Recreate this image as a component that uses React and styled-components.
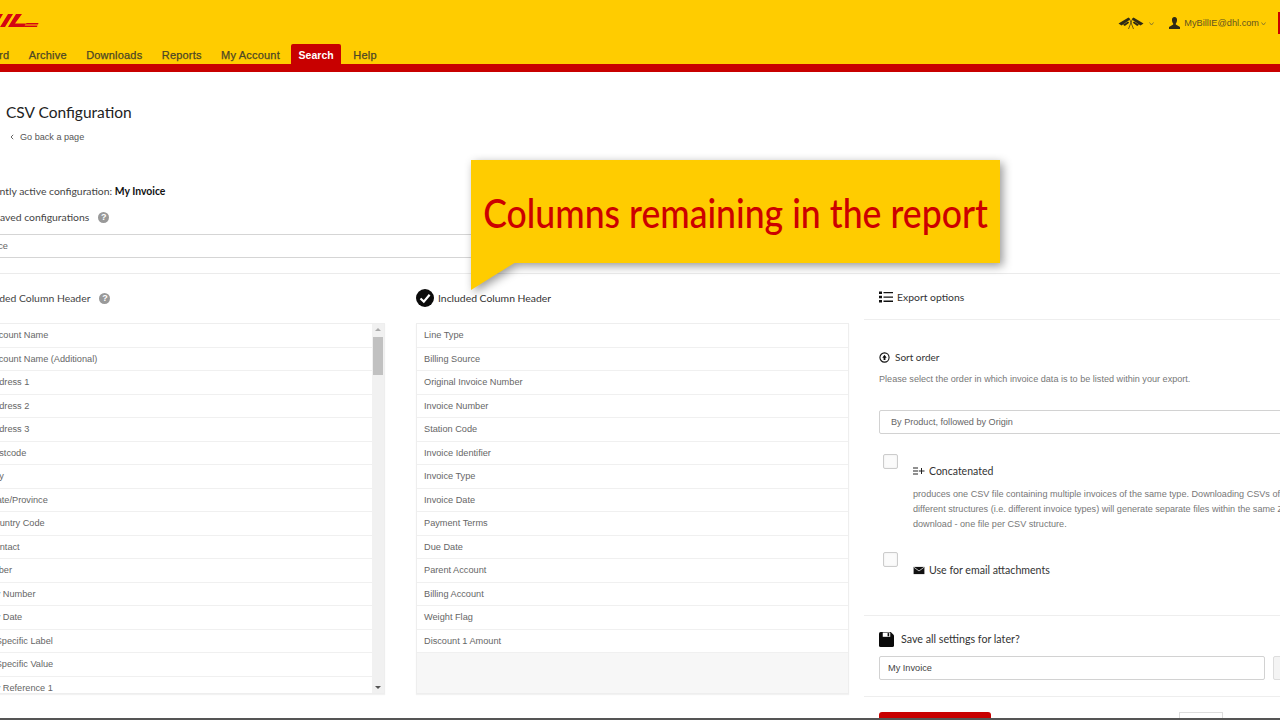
import React from "react";
import styled, { createGlobalStyle } from "styled-components";

const Global = createGlobalStyle`
  html, body { margin: 0; padding: 0; background: #fff; }
  body { font-family: "Liberation Sans", Arial, sans-serif; }
  * { box-sizing: border-box; }
`;

const Viewport = styled.div`
  position: relative;
  width: 1280px;
  height: 720px;
  overflow: hidden;
  background: #fff;
  filter: blur(0.4px);
`;

const Header = styled.header`
  height: 72px;
  background: #ffcc00;
  border-bottom: 8px solid #c80000;
  display: flex;
  flex-direction: column;
`;

const TopRow = styled.div`
  height: 44px;
  flex: none;
  display: flex;
  align-items: flex-start;
  justify-content: space-between;
`;

const Logo = styled.svg`
  width: 40px;
  height: 14px;
  margin-top: 14px;
  color: #d40511;
`;

const UserArea = styled.div`
  display: flex;
  align-items: center;
  height: 22px;
  margin-top: 12px;
  color: #5f5320;
  font-size: 9.2px;
`;

const Lang = styled.svg`
  width: 26px;
  height: 14px;
  color: #2f2a15;
`;

const Caret = styled.svg`
  width: 5px;
  height: 4px;
  margin: 1px 0 0 ${(p) => p.$left}px;
  color: #7f7130;
`;

const Person = styled.svg`
  width: 11px;
  height: 12px;
  margin: 0 4px 0 15px;
  color: #2f2a15;
`;

const Flag = styled.span`
  width: 2px;
  height: 22px;
  margin-left: 12px;
  background: #c80000;
`;

const Nav = styled.nav`
  height: 20px;
  display: flex;
  margin-left: -56px;
`;

const Tab = styled.a`
  height: 20px;
  padding: ${(p) => (p.$active ? "1px 7.5px 0" : "1px 9.7px 0")};
  margin: ${(p) => (p.$active ? "0 2.5px 0 1.5px" : "0")};
  display: flex;
  align-items: center;
  font-size: ${(p) => (p.$active ? "10.5px" : "11px")};
  font-weight: ${(p) => (p.$active ? 700 : 400)};
  letter-spacing: ${(p) => (p.$active ? "0" : "0.2px")};
  -webkit-text-stroke: ${(p) => (p.$active ? "0" : "0.25px")};
  color: ${(p) => (p.$active ? "#fff" : "#4d4726")};
  background: ${(p) => (p.$active ? "#c80000" : "transparent")};
  border-radius: 2px 2px 0 0;
`;

const Body = styled.main`
  width: 1380px;
  margin-left: -40px;
`;

const TitleBlock = styled.div`
  padding: 30px 0 0 46px;
  height: 108px;
`;

const Title = styled.h1`
  margin: 0;
  font: 400 15.5px/20px Lato, sans-serif;
  color: #222;
`;

const Back = styled.div`
  margin: 8px 0 0 4px;
  display: flex;
  align-items: center;
  gap: 6px;
  font-size: 9.1px;
  line-height: 14px;
  color: #555;
`;

const ConfigBlock = styled.section`
  height: 94px;
  padding: 3px 0 0 14px;
  border-bottom: 1px solid #ebebeb;
`;

const ActiveLine = styled.div`
  font: 400 10.4px/16px Lato, sans-serif;
  color: #444;
  white-space: nowrap;
  b { color: #111; font-weight: 700; }
`;

const Label = styled.div`
  display: flex;
  align-items: center;
  font: 400 ${(p) => p.$size || 10.4}px/16px Lato, sans-serif;
  color: ${(p) => p.$color || "#444"};
  white-space: nowrap;
`;

const SavedLabel = styled(Label)`
  margin: 10px 0 0 -3px;
`;

const Help = styled.span`
  width: 11px;
  height: 11px;
  margin-left: 9px;
  border-radius: 50%;
  background: #999;
  color: #fff;
  font: 700 9px/11px "Liberation Sans", sans-serif;
  text-align: center;
`;

const ConfigSelect = styled.div`
  width: 1020px;
  height: 24px;
  margin: 9px 0 0 -14px;
  padding-left: 4px;
  border-top: 1px solid #d5d5d5;
  border-bottom: 1px solid #d5d5d5;
  font-size: 9.2px;
  line-height: 22px;
  color: #666;
`;

const Columns = styled.div`
  display: grid;
  grid-template-columns: 405px 433px 1fr;
  column-gap: 31px;
  padding-left: 20px;
`;

const ListColumn = styled.section`
  padding-top: 14px;
`;

const ListTitle = styled(Label)`
  height: 20px;
  margin-bottom: 15px;
  margin-left: ${(p) => p.$left || 0}px;
`;

const CheckIcon = styled.svg`
  width: 18px;
  height: 18px;
  margin-right: 4px;
`;

const ListBox = styled.div`
  position: relative;
  height: 371px;
  overflow: hidden;
  border: 1px solid #eee;
  background: ${(p) => p.$bg || "#fff"};
  padding-right: ${(p) => (p.$scroll ? "12px" : "0")};
  box-shadow: 0 1px 1px rgba(0, 0, 0, 0.05);
`;

const Row = styled.div`
  height: 23.5px;
  padding-left: 7px;
  border-bottom: 1px solid #f0f0f0;
  background: #fff;
  font-size: 9.2px;
  line-height: 22.5px;
  color: #666;
  white-space: nowrap;
`;

const ScrollBar = styled.div`
  position: absolute;
  top: 0;
  right: 0;
  bottom: 0;
  width: 12px;
  background: #f1f1f1;
`;

const ScrollThumb = styled.div`
  position: absolute;
  top: 13px;
  left: 1px;
  width: 10px;
  height: 38px;
  background: #c1c1c1;
`;

const Arrow = styled.span`
  position: absolute;
  left: 3px;
  ${(p) => (p.$up ? "top: 4px;" : "bottom: 4px;")}
  width: 0;
  height: 0;
  border-left: 3px solid transparent;
  border-right: 3px solid transparent;
  ${(p) => (p.$up ? "border-bottom: 3px solid #aaa;" : "border-top: 3px solid #555;")}
`;

const Options = styled.aside`
  margin-left: -16px;
`;

const OptionsHead = styled(Label)`
  height: 46px;
  padding-left: 15px;
  border-bottom: 1px solid #eee;
  margin-bottom: 29px;
`;

const HeadIcon = styled.svg`
  width: ${(p) => p.$w || 14}px;
  height: ${(p) => p.$h || 14}px;
  margin-right: ${(p) => p.$gap || 4}px;
  flex: none;
`;

const Pad = styled.div`
  padding-left: 15px;
`;

const Help2 = styled.p`
  margin: 7px 0 0;
  font-size: 9.1px;
  line-height: 14px;
  color: #777;
  white-space: nowrap;
`;

const OptSelect = styled.div`
  height: 24px;
  margin-top: 24px;
  padding-left: 11px;
  border: 1px solid #d2d2d2;
  border-radius: 2px;
  font-size: 9.1px;
  line-height: 22px;
  color: #666;
`;

const CheckRow = styled.div`
  display: grid;
  grid-template-columns: 30px 1fr;
  padding-left: 4px;
  margin-top: ${(p) => p.$top}px;
`;

const Check = styled.span`
  width: 15px;
  height: 15px;
  border: 1px solid #ccc;
  border-radius: 2px;
  background: #fbfbfb;
  box-shadow: inset 0 0 2px rgba(0, 0, 0, 0.08);
`;

const CheckBody = styled.div`
  padding-top: ${(p) => p.$top || 9}px;
`;

const Para = styled.p`
  margin: 8px 0 0;
  font-size: 9.1px;
  line-height: 15px;
  color: #777;
  white-space: nowrap;
`;

const Separator = styled.div`
  height: 1px;
  margin-top: ${(p) => p.$top}px;
  background: #eee;
`;

const SaveLabel = styled(Label)`
  margin-top: 15px;
`;

const SaveRow = styled.div`
  display: flex;
  gap: 8px;
  margin-top: 9px;
`;

const SaveInput = styled.div`
  width: 386px;
  height: 24px;
  padding-left: 8px;
  border: 1px solid #d2d2d2;
  border-radius: 2px;
  font-size: 9.2px;
  line-height: 22px;
  color: #444;
`;

const SaveButton = styled.div`
  width: 60px;
  height: 24px;
  border: 1px solid #ddd;
  border-radius: 2px;
  background: #f4f4f4;
`;

const Actions = styled.div`
  display: flex;
  margin-top: 15px;
`;

const RedButton = styled.div`
  width: 112px;
  height: 24px;
  border-radius: 3px 3px 0 0;
  background: #c80000;
`;

const GhostButton = styled.div`
  width: 44px;
  height: 24px;
  margin-left: 188px;
  border: 1px solid #ddd;
  background: #fff;
`;

const BottomEdge = styled.div`
  position: absolute;
  left: 0;
  right: 0;
  bottom: 0;
  height: 2px;
  background: #555;
`;

const Callout = styled.div`
  position: absolute;
  left: 471px;
  top: 160px;
  width: 529px;
  height: 103px;
  display: flex;
  align-items: center;
  justify-content: center;
  background: #ffcc00;
  filter: drop-shadow(3px 3px 5px rgba(0, 0, 0, 0.4));
  &::after {
    content: "";
    position: absolute;
    left: 0;
    top: 102px;
    width: 45px;
    height: 28px;
    background: #ffcc00;
    clip-path: polygon(0 0, 100% 0, 0 100%);
  }
`;

const CalloutText = styled.span`
  font: 500 40px/1 Lato, sans-serif;
  color: #cc0000;
  white-space: nowrap;
  transform: scaleX(0.89);
  margin-top: 2px;
`;

const left = ["Account Name","Account Name (Additional)","Address 1","Address 2","Address 3","Postcode","City","State/Province","Country Code","Contact","Faber","Inv Number","Inv Date","– Specific Label","– Specific Value","Inv Reference 1"];
const mid = ["Line Type","Billing Source","Original Invoice Number","Invoice Number","Station Code","Invoice Identifier","Invoice Type","Invoice Date","Payment Terms","Due Date","Parent Account","Billing Account","Weight Flag","Discount 1 Amount"];

const chevronCaret = <path d="M0.5 0.5 L2.5 3 L4.5 0.5" fill="none" stroke="currentColor" strokeWidth="0.9" />;

export default function App() {
  return (
    <Viewport>
      <Global />
      <Header>
        <TopRow>
          <Logo viewBox="0 0 40 14" aria-label="DHL">
            <path fill="currentColor" d="M-1 0 H3 L0 5 H-1 Z M0 13 L8 0 H13 L5 13 Z M8 13 L16 0 H22 L15 9.5 H26 L24 13 Z M26.5 9 H38.5 L38 10.5 H25.5 Z M25 11.5 H37.5 L37 13 H24 Z" />
          </Logo>
          <UserArea>
            <Lang viewBox="0 0 26 14">
              <path fill="currentColor" d="M0.5 7.5 L10.5 1.5 L12.5 3.2 L3.5 9.5 Z M25.5 7.5 L15.5 1.5 L13.5 3.2 L22.5 9.5 Z M5 8.8 L10 5.5 L11.2 6.8 L6.8 10 Z M21 8.8 L16 5.5 L14.8 6.8 L19.2 10 Z" />
              <path stroke="currentColor" strokeWidth="0.7" fill="none" d="M14 4 L10.5 13 M12 4 L15.5 13" />
            </Lang>
            <Caret $left={5} viewBox="0 0 5 4">{chevronCaret}</Caret>
            <Person viewBox="0 0 11 12">
              <path fill="currentColor" d="M5.5 0 C7.4 0 8.2 1.5 8 3.5 C7.9 5 7.2 6 6.8 6.6 L6.8 7.6 L11 10 L11 12 L0 12 L0 10 L4.2 7.6 L4.2 6.6 C3.8 6 3.1 5 3 3.5 C2.8 1.5 3.6 0 5.5 0 Z" />
            </Person>
            <span>MyBillIE@dhl.com</span>
            <Caret $left={2} viewBox="0 0 5 4">{chevronCaret}</Caret>
            <Flag />
          </UserArea>
        </TopRow>
        <Nav>
          <Tab>Dashboard</Tab>
          <Tab>Archive</Tab>
          <Tab>Downloads</Tab>
          <Tab>Reports</Tab>
          <Tab>My Account</Tab>
          <Tab $active>Search</Tab>
          <Tab>Help</Tab>
        </Nav>
      </Header>
      <Body>
        <TitleBlock>
          <Title>CSV Configuration</Title>
          <Back>
            <svg width="4" height="6" viewBox="0 0 4 6"><path d="M3.2 0.8 L1 3 L3.2 5.2" fill="none" stroke="#555" strokeWidth="0.9" /></svg>
            Go back a page
          </Back>
        </TitleBlock>
        <ConfigBlock>
          <ActiveLine>Currently active configuration: <b>My Invoice</b></ActiveLine>
          <SavedLabel>Load saved configurations<Help>?</Help></SavedLabel>
          <ConfigSelect>My Invoice</ConfigSelect>
        </ConfigBlock>
        <Columns>
          <ListColumn>
            <ListTitle $left={-5}>Excluded Column Header<Help>?</Help></ListTitle>
            <ListBox $scroll>
              {left.map((t) => <Row key={t}>{t}</Row>)}
              <ScrollBar>
                <Arrow $up />
                <ScrollThumb />
                <Arrow />
              </ScrollBar>
            </ListBox>
          </ListColumn>
          <ListColumn>
            <ListTitle $color="#333">
              <CheckIcon viewBox="0 0 18 18">
                <circle cx="9" cy="9" r="9" fill="#0b0b0b" />
                <path d="M4.5 9.5 L7.8 12.6 L13.6 5.8" fill="none" stroke="#fff" strokeWidth="2.2" />
              </CheckIcon>
              Included Column Header
            </ListTitle>
            <ListBox $bg="#f7f7f7">
              {mid.map((t) => <Row key={t}>{t}</Row>)}
            </ListBox>
          </ListColumn>
          <Options>
            <OptionsHead $color="#333">
              <HeadIcon viewBox="0 0 14 14" $gap={4}>
                <path fill="#111" d="M0 1.5 h3 v2.5 h-3 Z M0 5.8 h3 v2.5 h-3 Z M0 10 h3 v2.5 h-3 Z M4.5 2 h9.5 v1.3 h-9.5 Z M4.5 6.4 h9.5 v1.3 h-9.5 Z M4.5 10.6 h9.5 v1.3 h-9.5 Z" />
              </HeadIcon>
              Export options
            </OptionsHead>
            <Pad>
              <Label $size={10} $color="#333">
                <HeadIcon viewBox="0 0 12 12" $w={11} $h={11} $gap={5}>
                  <circle cx="6" cy="6" r="5" fill="none" stroke="#111" strokeWidth="1.2" />
                  <path fill="#111" d="M6 3 L8.4 6.2 L7 6.2 L7 8.6 L5 8.6 L5 6.2 L3.6 6.2 Z" />
                </HeadIcon>
                Sort order
              </Label>
              <Help2>Please select the order in which invoice data is to be listed within your export.</Help2>
              <OptSelect>By Product, followed by Origin</OptSelect>
              <CheckRow $top={20}>
                <Check />
                <CheckBody>
                  <Label $size={10.5} $color="#333">
                    <HeadIcon viewBox="0 0 12 10" $w={12} $h={10} $gap={4}>
                      <path fill="#222" d="M0 1.5 h5 v1 h-5 Z M0 4.5 h5 v1 h-5 Z M0 7.5 h5 v1 h-5 Z M8 2 h1 v2.5 h2.5 v1 h-2.5 v2.5 h-1 v-2.5 h-2.2 v-1 h2.2 Z" />
                    </HeadIcon>
                    Concatenated
                  </Label>
                  <Para>produces one CSV file containing multiple invoices of the same type. Downloading CSVs of<br />different structures (i.e. different invoice types) will generate separate files within the same ZIP<br />download - one file per CSV structure.</Para>
                </CheckBody>
              </CheckRow>
              <CheckRow $top={20}>
                <Check />
                <CheckBody $top={10}>
                  <Label $size={10.6} $color="#333">
                    <HeadIcon viewBox="0 0 12 10" $w={12} $h={9} $gap={4}>
                      <path fill="#111" d="M0 1 h12 v8 h-12 Z" />
                      <path d="M0.5 1.5 L6 5.5 L11.5 1.5" fill="none" stroke="#fff" strokeWidth="0.8" />
                    </HeadIcon>
                    Use for email attachments
                  </Label>
                </CheckBody>
              </CheckRow>
            </Pad>
            <Separator $top={37} />
            <Pad>
              <SaveLabel $size={10.7} $color="#333">
                <HeadIcon viewBox="0 0 14 14" $w={15} $h={15} $gap={7}>
                  <path fill="#0a0a0a" d="M1.5 0 H11 L14 3 V12.5 Q14 14 12.5 14 H1.5 Q0 14 0 12.5 V1.5 Q0 0 1.5 0 Z" />
                  <path fill="#fff" d="M3.5 0.5 H10.5 V4.5 H3.5 Z" />
                  <path fill="#0a0a0a" d="M8 1 H9.5 V4 H8 Z" />
                </HeadIcon>
                Save all settings for later?
              </SaveLabel>
              <SaveRow>
                <SaveInput>My Invoice</SaveInput>
                <SaveButton />
              </SaveRow>
            </Pad>
            <Separator $top={16} />
            <Pad>
              <Actions>
                <RedButton />
                <GhostButton />
              </Actions>
            </Pad>
          </Options>
        </Columns>
      </Body>
      <Callout><CalloutText>Columns remaining in the report</CalloutText></Callout>
      <BottomEdge />
    </Viewport>
  );
}
